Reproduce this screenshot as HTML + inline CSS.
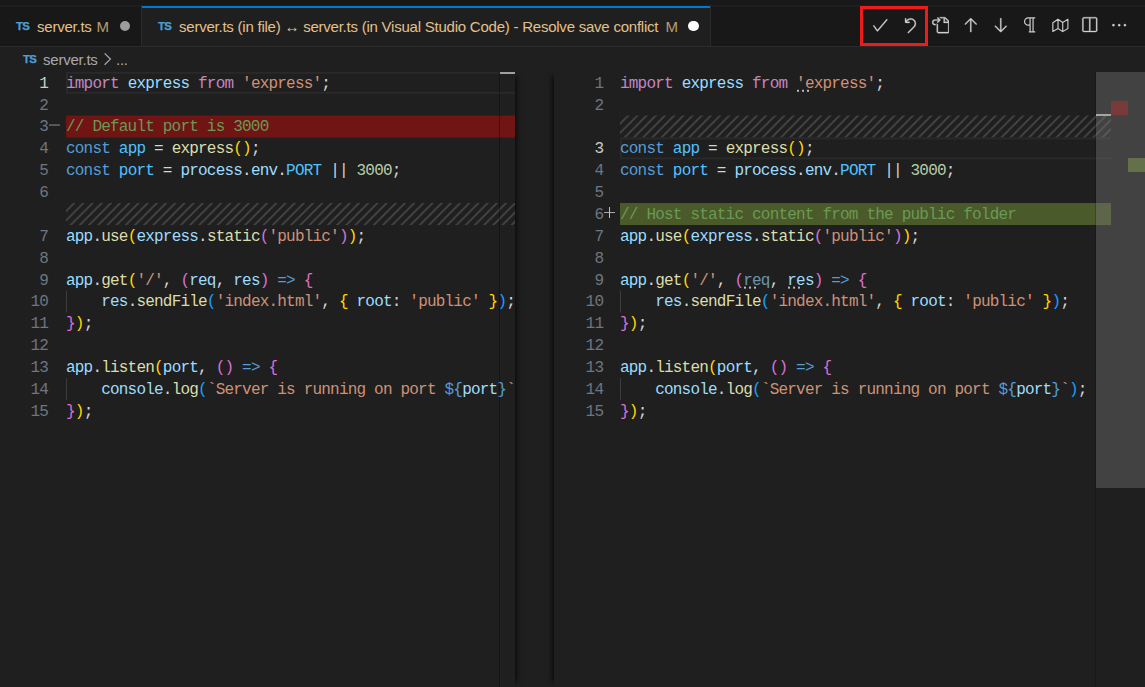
<!DOCTYPE html>
<html>
<head>
<meta charset="utf-8">
<title>server.ts - Resolve save conflict</title>
<style>
*{box-sizing:border-box;margin:0;padding:0}
html,body{width:1145px;height:687px;overflow:hidden;background:#1f1f1f}
body{position:relative;font-family:"Liberation Sans",sans-serif;color:#ccc}
#strip{position:absolute;left:0;top:0;width:1145px;height:5px;background:#181818}
#tabs{position:absolute;left:0;top:5px;width:1145px;height:41.5px;background:#181818;border-bottom:1.5px solid #2b2b2b}
#tabs:before{content:"";position:absolute;left:0;top:0;width:1145px;height:2px;background:#1e1e1e}
.tab{position:absolute;top:0;height:41px;font-size:15px;letter-spacing:-0.23px;line-height:41px;color:#e2c08d;white-space:nowrap}
#tab1{left:0;width:142px;border-right:1px solid #2b2b2b}
#tab2{left:142px;width:569px;background:#1f1f1f;border-right:1px solid #2b2b2b}
#tab2:before{content:"";position:absolute;left:0;top:0.7px;width:568px;height:2.4px;background:#0078d4}
.ts{position:absolute;top:0.5px;font-size:11.4px;font-weight:bold;color:#4da0d3;-webkit-text-stroke:0.25px #4da0d3;letter-spacing:-0.75px;line-height:41px}
.lbl{position:absolute;top:1.4px}
.m{position:absolute;top:1.4px;color:#e2c08d;opacity:.78}
.dot{position:absolute;border-radius:50%;width:10.4px;height:10.4px}
#crumb{position:absolute;left:0;top:46px;width:1145px;height:26px;font-size:15px;letter-spacing:-0.23px;line-height:26px;color:#a9a9a9;white-space:nowrap}
/* editors */
#eds{position:absolute;left:0;top:72px;width:1145px;height:615px;overflow:hidden}
.ed{position:absolute;top:0;height:615px;overflow:hidden}
#edL{left:0;width:515px;box-shadow:6px 0 6px -5px rgba(0,0,0,.85)}
#edR{left:554px;width:557px;box-shadow:-6px 0 6px -5px rgba(0,0,0,.85)}
.ed>div{position:absolute}
.ln{top:-72px;left:0;width:48px;text-align:right;height:22px;line-height:22px;font-family:"Liberation Mono",monospace;font-size:16px;letter-spacing:-0.8px;color:#6e7681}
.ln.act{color:#cccccc}
#edR .ln{left:1.2px}
#edR .mk{left:49.6px}
.cl{top:-72px;left:66px;height:22px;line-height:22px;white-space:pre;font-family:"Liberation Mono",monospace;font-size:16px;letter-spacing:-0.8px;color:#d4d4d4}
.bg{top:-72px;left:66px;right:0;height:21.87px}
.del{background:#701414}
.ins{background:#4b5a2a}
.hatch{top:-72px;left:66px;right:0;height:21.87px;background-image:linear-gradient(-45deg,#424242 11.5%,transparent 11.5%,transparent 50%,#424242 50%,#424242 61.5%,transparent 61.5%,transparent 100%);background-size:9.2px 9.2px}
.curline{top:-72px;left:66px;right:0;height:21.87px;border-top:2px solid #292929;border-bottom:2px solid #292929;border-left:2px solid #292929}
.guide{top:-72px;left:66px;width:1px;height:21.87px;background:#3c3c3c}
.mk{top:-72px;left:49.2px;width:11px;height:21.87px}
.mk.minus:before{content:"";position:absolute;left:0;top:9.3px;width:11px;height:1.2px;background:#8c8c8c}
.mk.plus:before{content:"";position:absolute;left:0.6px;top:8.85px;width:10.9px;height:1.35px;background:#a8a8a8}
.mk.plus:after{content:"";position:absolute;left:5.4px;top:4px;width:1.35px;height:11.1px;background:#c0c0c0}
.hint{top:-72px;width:12.6px;height:2.4px;background:radial-gradient(circle at 1.2px 1.2px,#b8b8b8 1px,rgba(184,184,184,0) 1.35px) 0 0/5px 2.4px repeat-x}
.dim{opacity:.62}
.k{color:#c586c0}.v{color:#9cdcfe}.s{color:#ce9178}.c{color:#4fc1ff}.f{color:#dcdcaa}.n{color:#b5cea8}
.d{color:#d4d4d4}.b{color:#569cd6}.g{color:#ffd700}.o{color:#da70d6}.u{color:#179fff}.m2{color:#6a9955}
.ic{position:absolute;fill:#d0d0d0}
.ic path:not([fill]){stroke:#d0d0d0;stroke-width:.25}
#redbox{position:absolute;left:860.2px;top:1px;width:68px;height:40px;border:3.2px solid #ec1c1c}
#slider{position:absolute;left:1095.5px;top:72px;width:49.5px;height:415.7px;background:rgba(121,121,121,.4)}
#rulL{position:absolute;left:499px;top:72px;width:1px;height:615px;background:rgba(0,0,0,.3)}
#curL{position:absolute;left:500px;top:71.8px;width:15px;height:2.2px;background:#a0a0a0}
#rulR{position:absolute;left:1094.5px;top:72px;width:1px;height:615px;background:rgba(0,0,0,.22)}
#curR{position:absolute;left:1095.5px;top:113.8px;width:15.7px;height:2.2px;background:#c4c4c4}
#ovRed{position:absolute;left:1111.2px;top:100.7px;width:17.2px;height:13.9px;background:#7b3a3a}
#ovGreen{position:absolute;left:1128.4px;top:157.9px;width:16.6px;height:14.2px;background:#64704a}
</style>
</head>
<body>
<div id="strip"></div>
<div id="tabs">
  <div class="tab" id="tab1">
    <span class="ts" style="left:16px">TS</span>
    <span class="lbl" style="left:37px">server.ts</span>
    <span class="m" style="left:96.5px">M</span>
    <span class="dot" style="left:119.8px;top:15.6px;background:#9d9d9d"></span>
  </div>
  <div class="tab" id="tab2">
    <span class="ts" style="left:16px">TS</span>
    <span class="lbl" style="left:37px">server.ts (in file) &#8596; server.ts (in Visual Studio Code) - Resolve save conflict</span>
    <span class="m" style="left:523.5px">M</span>
    <span class="dot" style="left:546.4px;top:15.6px;background:#ffffff"></span>
  </div>
  <svg class="ic" style="left:871.10px;top:11.30px" width="18.4" height="18.4" viewBox="0 0 16 16" ><path d="M14.431 3.323l-8.47 10-.79-.036-3.35-4.77.818-.574 2.978 4.24 8.051-9.506.764.646z"/></svg>
  <svg class="ic" style="left:901.00px;top:11.30px" width="18.4" height="18.4" viewBox="0 0 16 16" ><path d="M3.5 2v3.5L4 6h3.5V5H4.979l.941-.941a3.552 3.552 0 1 1 5.023 5.023L5.746 14.28l.72.72 5.198-5.198A4.57 4.57 0 0 0 5.2 3.339l-.7.7V2h-1z"/></svg>
  <svg class="ic" style="left:930.90px;top:11.30px" width="18.4" height="18.4" viewBox="0 0 16 16" ><path d="M6 5.914l2.06-2.06v-.708L5.915 1l-.707.707.043.043.25.25 1 1h-3a2.5 2.5 0 0 0 0 5H4V7h-.5a1.5 1.5 0 1 1 0-3h3L5.207 5.293 5.914 6 6 5.914zM11 2H8.328l-1-1H12l.71.29 3 3L16 5v9l-1 1H6l-1-1V6.5l1 .847V14h9V6h-4V2zm1 0v3h3l-3-3z"/></svg>
  <svg class="ic" style="left:960.80px;top:11.30px" width="18.4" height="18.4" viewBox="0 0 16 16" ><path d="M13.854 7l-5-5h-.707l-5 5 .707.707L8 3.561V14h1V3.56l4.146 4.147.708-.707z"/></svg>
  <svg class="ic" style="left:990.70px;top:11.30px" width="18.4" height="18.4" viewBox="0 0 16 16" ><path d="M3.147 9l5 5h.707l5-5-.707-.707L9 12.439V2H8v10.44L3.854 8.292 3.147 9z"/></svg>
  <svg class="ic" style="left:1020.60px;top:11.30px" width="18.4" height="18.4" viewBox="0 0 16 16" ><path fill="none" stroke="#ccc" stroke-width="1.05" d="M12.4 1.6H6.3A3.2 3.2 0 0 0 6.3 8H7.9M7.9 1.6V13.9M10.5 1.6V13.9M6.8 13.9H12.4"/></svg>
  <svg class="ic" style="left:1050.50px;top:11.30px" width="18.4" height="18.4" viewBox="0 0 16 16" ><path fill="none" stroke="#ccc" stroke-width="1" stroke-linejoin="round" d="M1.6 5.9L6.1 2.9L10.2 5.6L14.7 2.9V10.9L10.2 13.6L6.1 10.9L1.6 13.4ZM6.1 2.9V10.9M10.2 5.6V13.6"/></svg>
  <svg class="ic" style="left:1080.40px;top:11.30px" width="18.4" height="18.4" viewBox="0 0 16 16" ><path d="M14 1H3L2 2v11l1 1h11l1-1V2l-1-1zM8 13H3V2h5v11zm6 0H9V2h5v11z"/></svg>
  <svg class="ic" style="left:1110.30px;top:11.30px" width="18.4" height="18.4" viewBox="0 0 16 16" ><path d="M4 8a1 1 0 1 1-2 0 1 1 0 0 1 2 0zm5 0a1 1 0 1 1-2 0 1 1 0 0 1 2 0zm5 0a1 1 0 1 1-2 0 1 1 0 0 1 2 0z"/></svg>
  <div id="redbox"></div>
</div>
<div id="crumb">
  <span class="ts" style="left:23px;top:-0.2px;line-height:26px">TS</span>
  <span style="position:absolute;left:43px;top:0.5px">server.ts</span>
  <svg style="position:absolute;left:102px;top:5.5px" width="12" height="14" viewBox="0 0 12 14"><path fill="none" stroke="#a9a9a9" stroke-width="1.25" d="M2.6 1.4l5.8 5.7-5.8 5.7"/></svg>
  <span style="position:absolute;left:116px;top:0.5px">...</span>
</div>
<div id="eds">
<div class="ed" id="edL">
<div class="curline" style="transform:translateY(71.8px)"></div>
<div class="ln act" style="transform:translateY(72.7px)">1</div>
<div class="cl" style="transform:translateY(72.7px)"><span class="k">import</span><span class="d"> </span><span class="v">express</span><span class="d"> </span><span class="k">from</span><span class="d"> </span><span class="s">'express'</span><span class="d">;</span></div>
<div class="ln" style="transform:translateY(94.57px)">2</div>
<div class="bg del" style="transform:translateY(115.53999999999999px)"></div><div class="mk minus" style="transform:translateY(115.53999999999999px)"></div>
<div class="ln" style="transform:translateY(116.44px)">3</div>
<div class="cl" style="transform:translateY(116.44px)"><span class="m2">// Default port is 3000</span></div>
<div class="ln" style="transform:translateY(138.31px)">4</div>
<div class="cl" style="transform:translateY(138.31px)"><span class="b">const</span><span class="d"> </span><span class="c">app</span><span class="d"> = </span><span class="f">express</span><span class="g">()</span><span class="d">;</span></div>
<div class="ln" style="transform:translateY(160.18px)">5</div>
<div class="cl" style="transform:translateY(160.18px)"><span class="b">const</span><span class="d"> </span><span class="c">port</span><span class="d"> = </span><span class="v">process</span><span class="d">.</span><span class="v">env</span><span class="d">.</span><span class="c">PORT</span><span class="d"> || </span><span class="n">3000</span><span class="d">;</span></div>
<div class="ln" style="transform:translateY(182.05px)">6</div>
<div class="hatch" style="transform:translateY(203.02px)"></div>
<div class="ln" style="transform:translateY(225.79px)">7</div>
<div class="cl" style="transform:translateY(225.79px)"><span class="v">app</span><span class="d">.</span><span class="f">use</span><span class="g">(</span><span class="v">express</span><span class="d">.</span><span class="f">static</span><span class="o">(</span><span class="s">'public'</span><span class="o">)</span><span class="g">)</span><span class="d">;</span></div>
<div class="ln" style="transform:translateY(247.66px)">8</div>
<div class="ln" style="transform:translateY(269.53px)">9</div>
<div class="cl" style="transform:translateY(269.53px)"><span class="v">app</span><span class="d">.</span><span class="f">get</span><span class="g">(</span><span class="s">'/'</span><span class="d">, </span><span class="o">(</span><span class="v">req</span><span class="d">, </span><span class="v">res</span><span class="o">)</span><span class="d"> </span><span class="b">=&gt;</span><span class="d"> </span><span class="o">{</span></div>
<div class="guide" style="transform:translateY(290.5px)"></div>
<div class="ln" style="transform:translateY(291.4px)">10</div>
<div class="cl" style="transform:translateY(291.4px)"><span class="d">    </span><span class="v">res</span><span class="d">.</span><span class="f">sendFile</span><span class="u">(</span><span class="s">'index.html'</span><span class="d">, </span><span class="g">{</span><span class="d"> </span><span class="v">root</span><span class="d">: </span><span class="s">'public'</span><span class="d"> </span><span class="g">}</span><span class="u">)</span><span class="d">;</span></div>
<div class="ln" style="transform:translateY(313.27px)">11</div>
<div class="cl" style="transform:translateY(313.27px)"><span class="o">}</span><span class="g">)</span><span class="d">;</span></div>
<div class="ln" style="transform:translateY(335.14px)">12</div>
<div class="ln" style="transform:translateY(357.01px)">13</div>
<div class="cl" style="transform:translateY(357.01px)"><span class="v">app</span><span class="d">.</span><span class="f">listen</span><span class="g">(</span><span class="v">port</span><span class="d">, </span><span class="o">()</span><span class="d"> </span><span class="b">=&gt;</span><span class="d"> </span><span class="o">{</span></div>
<div class="guide" style="transform:translateY(377.98px)"></div>
<div class="ln" style="transform:translateY(378.88px)">14</div>
<div class="cl" style="transform:translateY(378.88px)"><span class="d">    </span><span class="v">console</span><span class="d">.</span><span class="f">log</span><span class="u">(</span><span class="s">`Server is running on port </span><span class="b">${</span><span class="v">port</span><span class="b">}</span><span class="s">`</span><span class="u">)</span><span class="d">;</span></div>
<div class="ln" style="transform:translateY(400.75px)">15</div>
<div class="cl" style="transform:translateY(400.75px)"><span class="o">}</span><span class="g">)</span><span class="d">;</span></div>
</div>
<div class="ed" id="edR">
<div class="ln" style="transform:translateY(72.7px)">1</div>
<div class="cl" style="transform:translateY(72.7px)"><span class="k">import</span><span class="d"> </span><span class="v">express</span><span class="d"> </span><span class="k">from</span><span class="d"> </span><span class="s">'express'</span><span class="d">;</span></div>
<div class="ln" style="transform:translateY(94.57px)">2</div>
<div class="hatch" style="transform:translateY(115.53999999999999px)"></div>
<div class="curline" style="transform:translateY(137.41px)"></div>
<div class="ln act" style="transform:translateY(138.31px)">3</div>
<div class="cl" style="transform:translateY(138.31px)"><span class="b">const</span><span class="d"> </span><span class="c">app</span><span class="d"> = </span><span class="f">express</span><span class="g">()</span><span class="d">;</span></div>
<div class="ln" style="transform:translateY(160.18px)">4</div>
<div class="cl" style="transform:translateY(160.18px)"><span class="b">const</span><span class="d"> </span><span class="c">port</span><span class="d"> = </span><span class="v">process</span><span class="d">.</span><span class="v">env</span><span class="d">.</span><span class="c">PORT</span><span class="d"> || </span><span class="n">3000</span><span class="d">;</span></div>
<div class="ln" style="transform:translateY(182.05px)">5</div>
<div class="bg ins" style="transform:translateY(203.02px)"></div><div class="mk plus" style="transform:translateY(203.02px)"><i></i></div>
<div class="ln" style="transform:translateY(203.92px)">6</div>
<div class="cl" style="transform:translateY(203.92px)"><span class="m2">// Host static content from the public folder</span></div>
<div class="ln" style="transform:translateY(225.79px)">7</div>
<div class="cl" style="transform:translateY(225.79px)"><span class="v">app</span><span class="d">.</span><span class="f">use</span><span class="g">(</span><span class="v">express</span><span class="d">.</span><span class="f">static</span><span class="o">(</span><span class="s">'public'</span><span class="o">)</span><span class="g">)</span><span class="d">;</span></div>
<div class="ln" style="transform:translateY(247.66px)">8</div>
<div class="ln" style="transform:translateY(269.53px)">9</div>
<div class="cl" style="transform:translateY(269.53px)"><span class="v">app</span><span class="d">.</span><span class="f">get</span><span class="g">(</span><span class="s">'/'</span><span class="d">, </span><span class="o">(</span><span class="v dim">req</span><span class="d">, </span><span class="v">res</span><span class="o">)</span><span class="d"> </span><span class="b">=&gt;</span><span class="d"> </span><span class="o">{</span></div>
<div class="guide" style="transform:translateY(290.5px)"></div>
<div class="ln" style="transform:translateY(291.4px)">10</div>
<div class="cl" style="transform:translateY(291.4px)"><span class="d">    </span><span class="v">res</span><span class="d">.</span><span class="f">sendFile</span><span class="u">(</span><span class="s">'index.html'</span><span class="d">, </span><span class="g">{</span><span class="d"> </span><span class="v">root</span><span class="d">: </span><span class="s">'public'</span><span class="d"> </span><span class="g">}</span><span class="u">)</span><span class="d">;</span></div>
<div class="ln" style="transform:translateY(313.27px)">11</div>
<div class="cl" style="transform:translateY(313.27px)"><span class="o">}</span><span class="g">)</span><span class="d">;</span></div>
<div class="ln" style="transform:translateY(335.14px)">12</div>
<div class="ln" style="transform:translateY(357.01px)">13</div>
<div class="cl" style="transform:translateY(357.01px)"><span class="v">app</span><span class="d">.</span><span class="f">listen</span><span class="g">(</span><span class="v">port</span><span class="d">, </span><span class="o">()</span><span class="d"> </span><span class="b">=&gt;</span><span class="d"> </span><span class="o">{</span></div>
<div class="guide" style="transform:translateY(377.98px)"></div>
<div class="ln" style="transform:translateY(378.88px)">14</div>
<div class="cl" style="transform:translateY(378.88px)"><span class="d">    </span><span class="v">console</span><span class="d">.</span><span class="f">log</span><span class="u">(</span><span class="s">`Server is running on port </span><span class="b">${</span><span class="v">port</span><span class="b">}</span><span class="s">`</span><span class="u">)</span><span class="d">;</span></div>
<div class="ln" style="transform:translateY(400.75px)">15</div>
<div class="cl" style="transform:translateY(400.75px)"><span class="o">}</span><span class="g">)</span><span class="d">;</span></div>
<div class="hint" style="left:242.60px;transform:translateY(89.80px)"></div>
<div class="hint" style="left:189.80px;transform:translateY(286.63px)"></div>
<div class="hint" style="left:233.80px;transform:translateY(286.63px)"></div>
</div>
</div>
<div id="rulL"></div><div id="curL"></div>
<div id="rulR"></div><div id="curR"></div>
<div id="slider"></div>
<div id="ovRed"></div><div id="ovGreen"></div>
</body>
</html>
